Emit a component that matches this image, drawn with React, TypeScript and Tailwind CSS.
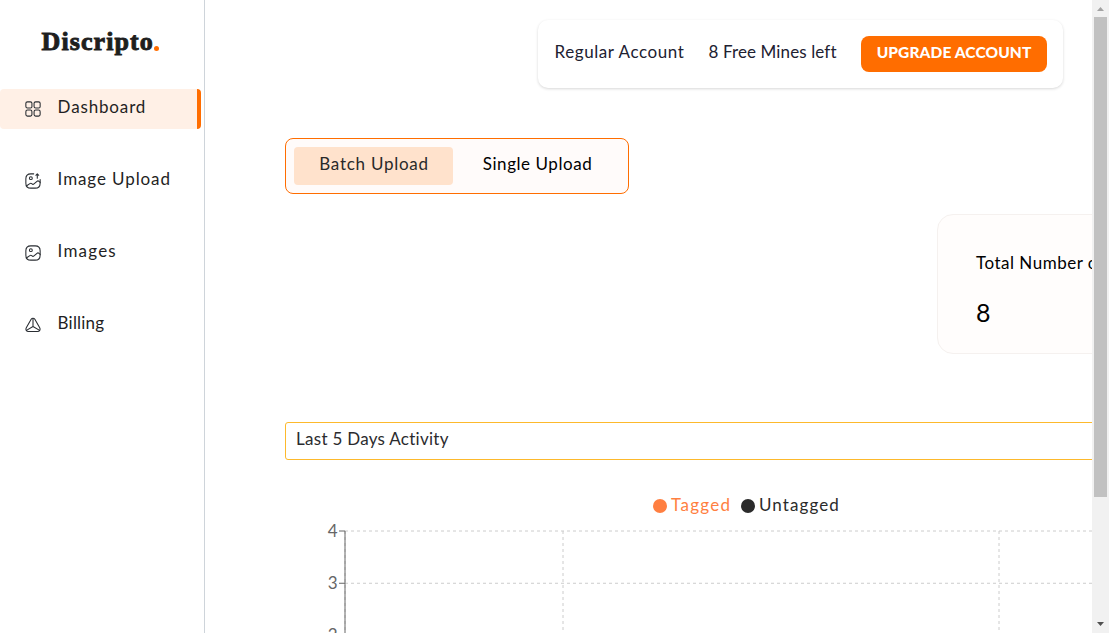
import type { ReactNode } from "react";

const iconProps = {
  width: 18,
  height: 18,
  viewBox: "-0.6 -0.6 25.2 25.2",
  fill: "none",
  stroke: "#292D32",
  strokeWidth: 1.5,
  strokeLinecap: "round" as const,
  strokeLinejoin: "round" as const,
};

function GridIcon() {
  return (
    <svg {...iconProps}>
      <path d="M22 8.52V3.98C22 2.57 21.36 2 19.77 2H15.73C14.14 2 13.5 2.57 13.5 3.98V8.51C13.5 9.93 14.14 10.49 15.73 10.49H19.77C21.36 10.5 22 9.93 22 8.52Z" />
      <path d="M22 19.77V15.73C22 14.14 21.36 13.5 19.77 13.5H15.73C14.14 13.5 13.5 14.14 13.5 15.73V19.77C13.5 21.36 14.14 22 15.73 22H19.77C21.36 22 22 21.36 22 19.77Z" />
      <path d="M10.5 8.52V3.98C10.5 2.57 9.86 2 8.27 2H4.23C2.64 2 2 2.57 2 3.98V8.51C2 9.93 2.64 10.49 4.23 10.49H8.27C9.86 10.5 10.5 9.93 10.5 8.52Z" />
      <path d="M10.5 19.77V15.73C10.5 14.14 9.86 13.5 8.27 13.5H4.23C2.64 13.5 2 14.14 2 15.73V19.77C2 21.36 2.64 22 4.23 22H8.27C9.86 22 10.5 21.36 10.5 19.77Z" />
    </svg>
  );
}

function UploadIcon() {
  return (
    <svg {...iconProps}>
      <circle cx="9" cy="8" r="2" />
      <path d="M13 2H9C4 2 2 4 2 9V15C2 20 4 22 9 22H15C20 22 22 20 22 15V10" />
      <path d="M18 8V2L20 4M18 2L16 4" />
      <path d="M2.67 18.95L7.6 15.64C8.39 15.11 9.53 15.17 10.24 15.78L10.57 16.07C11.35 16.74 12.61 16.74 13.39 16.07L17.55 12.5C18.33 11.83 19.59 11.83 20.37 12.5L22 13.9" />
    </svg>
  );
}

function GalleryIcon() {
  return (
    <svg {...iconProps}>
      <path d="M9 22H15C20 22 22 20 22 15V9C22 4 20 2 15 2H9C4 2 2 4 2 9V15C2 20 4 22 9 22Z" />
      <circle cx="9" cy="8" r="2" />
      <path d="M2.67 18.95L7.6 15.64C8.39 15.11 9.53 15.17 10.24 15.78L10.57 16.07C11.35 16.74 12.61 16.74 13.39 16.07L17.55 12.5C18.33 11.83 19.59 11.83 20.37 12.5L22 13.9" />
    </svg>
  );
}

function PyramidIcon() {
  return (
    <svg {...iconProps}>
      <path d="M9.4 4L2.6 15.8C1.3 18.1 2.4 21.2 5.8 21.2H18.2C21.6 21.2 22.7 18.1 21.4 15.8L14.6 4C13.4 2 10.6 2 9.4 4Z" />
      <path d="M12 2.8V14L2.8 19.5M12 14L21.2 19.5" />
    </svg>
  );
}

function NavItem({ icon, active, children }: { icon: ReactNode; active?: boolean; children: ReactNode }) {
  return (
    <li
      className={
        active
          ? "flex h-10 w-[201px] items-center overflow-hidden rounded-[4px] border-r-4 border-[#ff6d00] bg-[#fff0e6] pl-6"
          : "flex h-10 w-[201px] items-center pl-6"
      }
    >
      {icon}
      <a className="ml-[15.6px] whitespace-nowrap pb-1 text-[17px] leading-5 text-[#1f1f24]">{children}</a>
    </li>
  );
}

function Chart() {
  return (
    <svg width="1100" height="240" className="block shrink-0" fill="none">
      <g stroke="#cccccc" strokeDasharray="3 3">
        <path d="M60 13H1100M60 65.25H1100M60 117.5H1100" />
        <path d="M60 13V240M278 13V240M714 13V240" />
      </g>
      <path d="M60 13V240M54 13H60M54 65.25H60M54 117.5H60" stroke="#666666" />
      <g fill="#666666" fontSize="17" textAnchor="end">
        <text x="52.5" y="19">4</text>
        <text x="52.5" y="71">3</text>
        <text x="52.5" y="123">2</text>
      </g>
    </svg>
  );
}

export default function App() {
  return (
    <div className="flex h-[633px] w-full overflow-hidden bg-white font-['Lato',sans-serif]">
      <aside className="w-[205px] shrink-0 border-r border-[#ced4da]">
        <div className="flex h-[89px] items-start pl-[41.5px] pt-[26px] font-['Liberation_Serif',serif] text-[26px] font-bold leading-8 tracking-[1.1px] text-[#1e1e1e]">
          <span className="[-webkit-text-stroke:0.9px_#1e1e1e]">Discripto</span>
          <span className="mt-[20px] size-[5px] rounded-full bg-[#ff6d00]" />
        </div>
        <ul className="flex flex-col gap-8">
          <NavItem active icon={<GridIcon />}><span className="tracking-[0.85px]">Dashboard</span></NavItem>
          <NavItem icon={<UploadIcon />}><span className="tracking-[0.9px]">Image Upload</span></NavItem>
          <NavItem icon={<GalleryIcon />}><span className="tracking-[1.2px]">Images</span></NavItem>
          <NavItem icon={<PyramidIcon />}><span className="tracking-[0.2px]">Billing</span></NavItem>
        </ul>
      </aside>

      <main className="flex min-w-0 flex-1 flex-col overflow-hidden">
        <header className="ml-[333px] mt-5 flex h-[68px] w-[525px] shrink-0 items-center rounded-[10px] bg-white pl-[16.5px] text-[17px] leading-6 text-[#212131] shadow-[0_1px_3px_rgba(0,0,0,0.16)]">
          <span className="w-[154px] whitespace-nowrap pb-[4px] tracking-[0.58px]">Regular Account</span>
          <span className="w-[152.5px] whitespace-nowrap pb-[4px] tracking-[0.12px]">8 Free Mines left</span>
          <button className="h-9 w-[186px] whitespace-nowrap rounded-lg bg-[#ff6d00] pb-[4px] text-[15.5px] font-black tracking-[0.1px] text-white">
            UPGRADE ACCOUNT
          </button>
        </header>

        <div className="ml-20 mt-[50px] flex h-14 w-[344px] shrink-0 rounded-lg border border-[#ff6d00] bg-[#fffbfa] p-2 text-[17px] leading-6">
          <button className="h-[38px] w-[159px] shrink-0 whitespace-nowrap rounded-[4px] bg-[#ffe2cc] pb-1 pl-px tracking-[0.75px] text-[#292929]">
            Batch Upload
          </button>
          <button className="h-[38px] w-[169px] shrink-0 whitespace-nowrap pb-1 tracking-[0.55px] text-black">Single Upload</button>
        </div>

        <section className="ml-[732px] mt-5 flex h-[140px] w-[300px] shrink-0 flex-col rounded-2xl border border-[#f5f1ef] bg-[#fffdfc] pl-[38px] pt-9 text-black">
          <h2 className="whitespace-nowrap text-[17px] leading-6 tracking-[0.5px]">Total Number of Mines</h2>
          <p className="mt-[21px] text-[25px] leading-8">8</p>
        </section>

        <section className="ml-20 mt-[68px] flex shrink-0 flex-col">
          <h2 className="h-[38px] w-[1100px] rounded-[3px] border border-[#fdb92c] pl-[10px] pt-[4px] text-[17px] leading-6 tracking-[0.28px] text-[#2b2b2e]">
            Last 5 Days Activity
          </h2>
          <div className="ml-[368px] mt-[34px] flex h-6 items-center text-[17px] leading-6">
            <span className="mr-[4px] size-[14px] rounded-full bg-[#ff7f41]" />
            <span className="w-[70px] pb-[2px] tracking-[1.3px] text-[#ff7f41]">Tagged</span>
            <span className="mr-[4px] size-[14px] rounded-full bg-[#2b2b2b]" />
            <span className="pb-[2px] tracking-[1.1px] text-[#2b2b2b]">Untagged</span>
          </div>
          <Chart />
        </section>
      </main>

      <div className="flex w-[17px] shrink-0 flex-col items-center justify-between bg-[#f1f1f1]">
        <div className="flex flex-col items-center">
          <svg width="17" height="17"><path d="M5 11L8.5 7L12 11Z" fill="#a3a3a3" /></svg>
          <div className="h-[480px] w-[13px] bg-[#c1c1c1]" />
        </div>
        <svg width="17" height="17"><path d="M5 6L8.5 10L12 6Z" fill="#505050" /></svg>
      </div>
    </div>
  );
}
